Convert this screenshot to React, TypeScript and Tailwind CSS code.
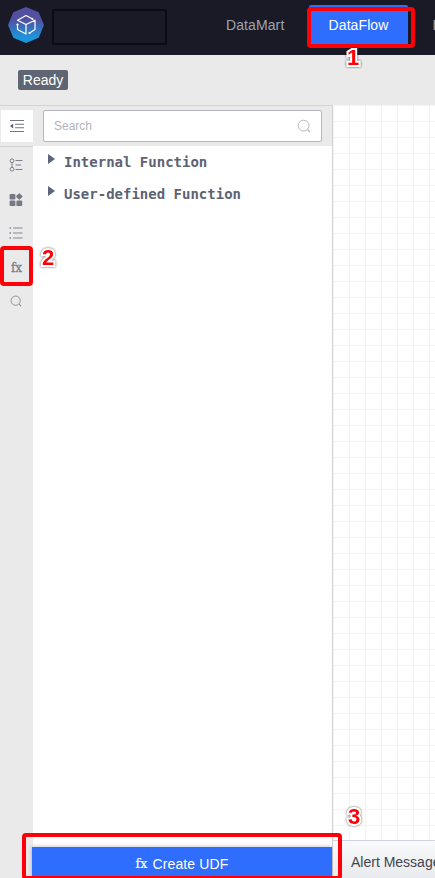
import React from "react";

function Logo() {
  return (
    <svg width="36" height="36" viewBox="0 0 36 36">
      <defs>
        <linearGradient id="logo" x1="0" y1="0" x2="0" y2="1">
          <stop offset="0.35" stopColor="#5250a0" />
          <stop offset="0.85" stopColor="#1b96dc" />
        </linearGradient>
      </defs>
      <path d="M18 0 30.7 5.3 36 18 30.7 30.7 18 36 5.3 30.7 0 18 5.3 5.3Z" fill="url(#logo)" />
      <g fill="none" stroke="#fff" strokeWidth="1.2" strokeLinejoin="round" strokeLinecap="round">
        <path d="M24.5 12 18 8.5 9.5 13.2 18 17.5 27 13.2V22.5L21.5 26" />
        <path d="M18 17.5V27L9.5 22.5V17.5" />
      </g>
      <circle cx="24.5" cy="12" r="1.1" fill="#fff" />
      <circle cx="9.5" cy="17.5" r="1.1" fill="#fff" />
      <circle cx="21.5" cy="26" r="1.1" fill="#fff" />
    </svg>
  );
}

function CollapseIcon() {
  return (
    <svg width="16" height="14" viewBox="0 0 16 14">
      <path d="M1 1.5H15M6 5.2H15M6 8.8H15M1 12.5H15" stroke="#737783" strokeWidth="1.1" />
      <path d="M4.2 4.6V9.4L1 7Z" fill="#5d6270" />
    </svg>
  );
}

function TreeIcon() {
  return (
    <svg width="14" height="14" viewBox="0 0 14 14" fill="none" stroke="#7d808a">
      <circle cx="3" cy="2.8" r="1.9" />
      <circle cx="3" cy="11.2" r="1.9" />
      <path d="M3 4.7V9.3M6.5 2.5H13.5M6.5 7H12M6.5 11.5H13.5" />
    </svg>
  );
}

function BlocksIcon() {
  return (
    <svg width="14" height="14" viewBox="0 0 14 14" fill="#767984">
      <rect x="0.6" y="0.9" width="5.8" height="5.6" rx="1.2" />
      <rect x="0.6" y="7.5" width="5.8" height="5.6" rx="1.2" />
      <rect x="7.4" y="7.5" width="5.8" height="5.6" rx="1.2" />
      <rect x="7.8" y="1" width="5" height="5" rx="1" transform="rotate(45 10.3 3.5)" />
    </svg>
  );
}

function ListIcon() {
  return (
    <svg width="14" height="14" viewBox="0 0 14 14" stroke="#858892" strokeWidth="1.1">
      <path d="M0.5 2H2M0.5 7H2M0.5 12H2" strokeWidth="1.5" />
      <path d="M4 2H13.5M4 7H13.5M4 12H13.5" />
    </svg>
  );
}

function SearchIcon({ size, color }: { size: number; color: string }) {
  return (
    <svg width={size} height={size} viewBox="0 0 14 14" fill="none" stroke={color}>
      <circle cx="6.6" cy="6.6" r="5.4" />
      <path d="M10.5 10.5 13 13" strokeWidth="1.2" />
    </svg>
  );
}

function Folder({ label }: { label: string }) {
  return (
    <div className="flex h-8 items-center pl-[15px]">
      <svg width="7" height="10" viewBox="0 0 7 10" className="mb-[6px]">
        <path d="M0 0 7 5 0 10Z" fill="#5d6577" />
      </svg>
      <span className="ml-[9px] font-['DejaVu_Sans_Mono',monospace] text-sm font-bold whitespace-pre text-[#5d6272]">{label}</span>
    </div>
  );
}

function Callout({ className, children }: { className: string; children: string }) {
  return (
    <span
      className={
        "absolute text-[22px] leading-[24px] font-bold text-[#ff0008] [-webkit-text-stroke:4px_white] [paint-order:stroke_fill] drop-shadow-[0_0_1px_rgba(0,0,0,0.65)] " +
        className
      }
    >
      {children}
    </span>
  );
}

export default function App() {
  return (
    <div className="relative flex h-[878px] w-[435px] flex-col overflow-hidden bg-white font-['Liberation_Sans',Arial,sans-serif]">
      <header className="flex h-[55px] shrink-0 bg-[#1a1a27]">
        <div className="mt-[7px] ml-2 shrink-0"><Logo /></div>
        <div className="mt-[9px] ml-2 h-9 w-[115px] shrink-0 rounded-xs border-2 border-[#0b0b13]" />
        <nav className="ml-[59px] flex shrink-0 text-[14px] tracking-[0.1px]">
          <span className="mt-[5px] w-[83px] leading-10 text-[#9ea3ae]">DataMart</span>
          <span className="mt-[5px] h-[41px] w-[99px] rounded-xs bg-[#2f6dff] text-center leading-10 text-white">DataFlow</span>
          <span className="mt-[5px] ml-[24.5px] leading-10 text-[#9ea3ae]">D</span>
        </nav>
      </header>
      <div className="flex h-[50px] shrink-0 items-center bg-[#eaeaea] pl-[18px]">
        <span className="h-5 w-[50px] rounded-xs bg-[#5f6573] text-center text-[14px] leading-5 text-white">Ready</span>
      </div>
      <main className="flex min-h-0 flex-1">
        <aside className="flex w-[33px] shrink-0 flex-col items-center border-t border-[#d3d3d3] bg-[#eaeaea]">
          <div className="mt-1 ml-px flex h-8 w-8 items-center justify-center bg-white"><CollapseIcon /></div>
          <div className="mt-1 h-px w-full shrink-0 bg-[#d3d3d3]" />
          <div className="mr-px flex h-9 items-center"><TreeIcon /></div>
          <div className="mr-px flex h-[33px] items-center"><BlocksIcon /></div>
          <div className="mr-px flex h-[34px] items-center"><ListIcon /></div>
          <div className="flex h-[35px] items-center font-['DejaVu_Serif',serif] text-[12px] text-[#7b7e88] [-webkit-text-stroke:0.3px_#7b7e88]">fx</div>
          <div className="mr-px flex h-8 items-center"><SearchIcon size={12} color="#858892" /></div>
        </aside>
        <section className="flex w-[300px] shrink-0 flex-col border-t border-r border-[#d3d3d3] bg-white">
          <div className="h-10 shrink-0 bg-[#eaeaea] pt-1 pl-[10px]">
            <div className="flex h-8 w-[279px] items-center justify-between rounded-xs border border-[#b5b7bf] bg-white pr-[10px] pl-[10px] text-[12px] text-[#b2b3bb]">
              Search
              <SearchIcon size={14} color="#b5b7bf" />
            </div>
          </div>
          <Folder label="Internal Function" />
          <Folder label="User-defined Function" />
          <div className="mt-auto -ml-px flex h-[31px] w-[300px] items-center justify-center bg-[#2f6dff] pt-[3px] text-[14px] tracking-[0.15px] text-white shadow-[0_0_4px_rgba(0,0,0,0.3)]">
            <span className="mr-[5px] font-['DejaVu_Serif',serif] text-[12.5px] [-webkit-text-stroke:0.2px_white]">fx</span>
            Create UDF
          </div>
        </section>
        <section className="flex min-w-0 flex-1 flex-col">
          <div className="flex-1 bg-[linear-gradient(#f3f3f3_1px,transparent_1px),linear-gradient(90deg,#f3f3f3_1px,transparent_1px)] bg-size-[16px_16px]" />
          <div className="h-[38px] shrink-0 border-t border-[#d2d3df] bg-linear-to-b from-[#f9fafb] to-[#e9eaed] pl-[18px] text-[14px] leading-[43px] whitespace-nowrap text-[#42444d]">Alert Message</div>
        </section>
      </main>
      <div className="absolute top-[7px] left-[307px] h-[41px] w-[108px] rounded-[4px] border-4 border-[#ff0008]" />
      <div className="absolute top-[246px] left-0 h-10 w-[33px] rounded-[4px] border-4 border-[#ff0008]" />
      <div className="absolute top-[833px] left-[22px] h-[47px] w-[320px] rounded-[4px] border-4 border-[#ff0008]" />
      <Callout className="top-[46px] left-[347px]">1</Callout>
      <Callout className="top-[246px] left-[42px]">2</Callout>
      <Callout className="top-[805px] left-[348px]">3</Callout>
    </div>
  );
}
